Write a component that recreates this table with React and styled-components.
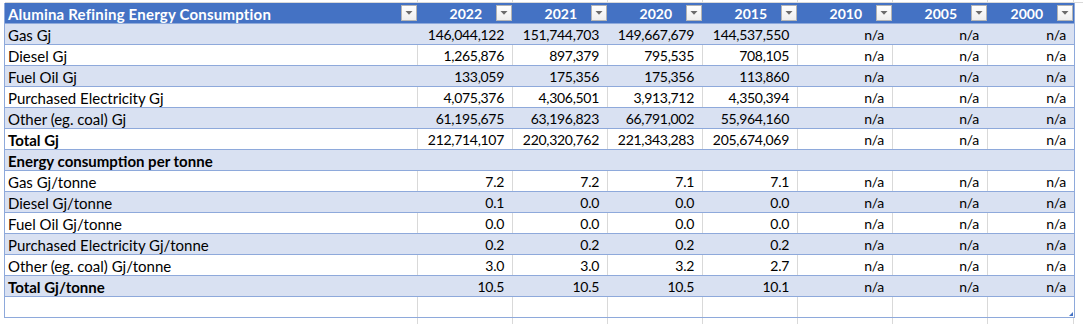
import React from 'react';
import styled, { createGlobalStyle } from 'styled-components';

const GlobalStyle = createGlobalStyle`
  body {
    margin: 0;
    background: #fff;
    font-family: Lato, 'Liberation Sans', Arial, sans-serif;
  }
`;

const COLS = '413px repeat(6, 95px) 86px';
const BAND = '#d9e1f2';
const LINE = '#8ea9db';
const GRID = '#d9d9d9';

const years = ['2022', '2021', '2020', '2015', '2010', '2005', '2000'];
const na = ['n/a', 'n/a', 'n/a'];

const rows = [
  { label: 'Gas Gj', values: ['146,044,122', '151,744,703', '149,667,679', '144,537,550', ...na] },
  { label: 'Diesel Gj', values: ['1,265,876', '897,379', '795,535', '708,105', ...na] },
  { label: 'Fuel Oil Gj', values: ['133,059', '175,356', '175,356', '113,860', ...na] },
  { label: 'Purchased Electricity Gj', values: ['4,075,376', '4,306,501', '3,913,712', '4,350,394', ...na] },
  { label: 'Other (eg. coal) Gj', values: ['61,195,675', '63,196,823', '66,791,002', '55,964,160', ...na] },
  { label: 'Total Gj', bold: true, values: ['212,714,107', '220,320,762', '221,343,283', '205,674,069', ...na] },
  { label: 'Energy consumption per tonne', bold: true, values: ['', '', '', '', '', '', ''] },
  { label: 'Gas Gj/tonne', values: ['7.2', '7.2', '7.1', '7.1', ...na] },
  { label: 'Diesel Gj/tonne', values: ['0.1', '0.0', '0.0', '0.0', ...na] },
  { label: 'Fuel Oil Gj/tonne', values: ['0.0', '0.0', '0.0', '0.0', ...na] },
  { label: 'Purchased Electricity Gj/tonne', values: ['0.2', '0.2', '0.2', '0.2', ...na] },
  { label: 'Other (eg. coal) Gj/tonne', values: ['3.0', '3.0', '3.2', '2.7', ...na] },
  { label: 'Total Gj/tonne', bold: true, values: ['10.5', '10.5', '10.5', '10.1', ...na] },
  { label: '', values: ['', '', '', '', '', '', ''] },
];

const Sheet = styled.div`
  width: 1083px;
  height: 324px;
  overflow: hidden;
  padding-left: 4px;
  box-sizing: border-box;
`;

const Ghost = styled.div`
  display: grid;
  grid-template-columns: ${COLS};
  height: ${(p) => p.$h}px;
  margin-left: 1px;
  box-sizing: border-box;
  border-bottom: ${(p) => (p.$line ? `1px solid ${GRID}` : 'none')};
`;

const GhostCell = styled.div`
  border-right: 1px solid ${GRID};
`;

const Table = styled.div`
  position: relative;
  width: 1071px;
  box-sizing: border-box;
  border-left: 1px solid ${LINE};
  border-right: 1px solid ${LINE};
  color: #000;
`;

const Row = styled.div`
  display: grid;
  grid-template-columns: ${COLS};
  height: 21px;
  box-sizing: border-box;
  border-bottom: 1px solid ${LINE};
  background: ${(p) => (p.$head ? '#4472c4' : p.$band ? BAND : '#fff')};
`;

const Cell = styled.div`
  line-height: 20px;
  padding: 1px ${(p) => (p.$num ? '8px' : '3px')} 0 3px;
  text-align: ${(p) => (p.$num ? 'right' : 'left')};
  font-size: ${(p) => (p.$num ? '14px' : '15px')};
  letter-spacing: ${(p) => (p.$num ? '-0.3px' : '0')};
  font-weight: ${(p) => (p.$bold ? 700 : 400)};
  white-space: nowrap;
  overflow: hidden;
  box-sizing: border-box;
  border-right: 1px solid ${(p) => (p.$grid ? GRID : 'transparent')};
  &:last-child {
    border-right: none;
  }
`;

const HeadCell = styled.div`
  display: flex;
  align-items: center;
  justify-content: ${(p) => (p.$num ? 'flex-end' : 'space-between')};
  gap: 14px;
  padding: 0 1px 0 3px;
  color: #fff;
  font-weight: 700;
  font-size: ${(p) => (p.$num ? '14px' : '15px')};
  letter-spacing: ${(p) => (p.$num ? '0' : '0.2px')};
  white-space: nowrap;
`;

const HeadText = styled.span`
  padding-top: 1px;
`;

const Filter = styled.span`
  display: flex;
  align-items: center;
  justify-content: center;
  width: 16px;
  height: 16px;
  box-sizing: border-box;
  border: 1px solid #b4b4b4;
  background: linear-gradient(#ffffff, #eeeeee);
  flex: none;
`;

const Handle = styled.span`
  position: absolute;
  right: 1px;
  bottom: 2px;
  width: 0;
  height: 0;
  border-left: 4px solid transparent;
  border-bottom: 4px solid #4472c4;
`;

const FilterButton = () => (
  <Filter>
    <svg width="8" height="4" viewBox="0 0 8 4">
      <polygon points="0.5,0 7.5,0 4,3.8" fill="#6b6b6b" />
    </svg>
  </Filter>
);

const GhostRow = ({ h, line }) => (
  <Ghost $h={h} $line={line}>
    {Array.from({ length: 8 }).map((_, i) => (
      <GhostCell key={i} />
    ))}
  </Ghost>
);

export default function App() {
  return (
    <Sheet>
      <GlobalStyle />
      <GhostRow h={3} line />
      <Table>
        <Row $head>
          <HeadCell>
            <HeadText>Alumina Refining Energy Consumption</HeadText>
            <FilterButton />
          </HeadCell>
          {years.map((y) => (
            <HeadCell key={y} $num>
              <HeadText>{y}</HeadText>
              <FilterButton />
            </HeadCell>
          ))}
        </Row>
        {rows.map((r, i) => {
          const band = i % 2 === 0;
          return (
            <Row key={i} $band={band}>
              <Cell $bold={r.bold} $grid={!band}>
                {r.label}
              </Cell>
              {r.values.map((v, j) => (
                <Cell key={j} $num $grid={!band}>
                  {v}
                </Cell>
              ))}
            </Row>
          );
        })}
        <Handle />
      </Table>
      <GhostRow h={6} />
    </Sheet>
  );
}
